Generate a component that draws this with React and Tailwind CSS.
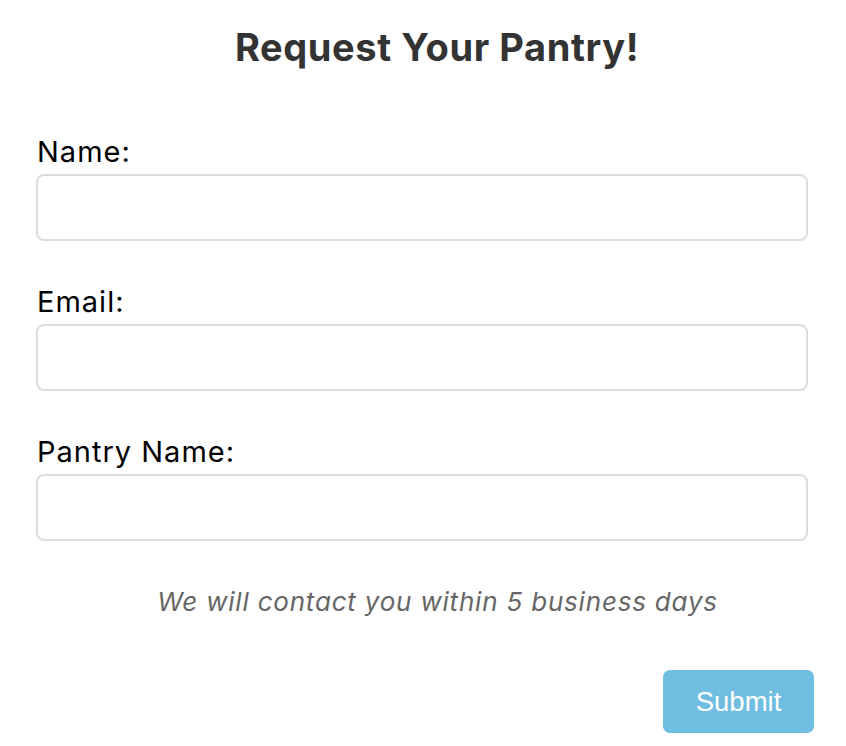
export default function App() {
  const fields = ["Name:", "Email:", "Pantry Name:"];
  return (
    <div className="w-[846px] h-[746px] bg-white overflow-hidden" style={{ fontFamily: "Inter, 'Noto Sans', sans-serif" }}>
      <h1 className="pt-[22px] pl-[28px] text-center text-[38px] leading-[50px] font-bold text-[#333333] tracking-[0.6px]">
        Request Your Pantry!
      </h1>
      <form className="mt-[62px] flex flex-col pl-[36px] pr-[38px]">
        {fields.map((label) => (
          <div key={label} className="flex flex-col mb-[43px]">
            <label className="text-[29px] leading-[36px] tracking-[1px] text-black mb-[4px] ml-[1px]">{label}</label>
            <input
              type="text"
              className="h-[67px] w-full rounded-[8px] border-2 border-[#dddddd] bg-white"
            />
          </div>
        ))}
        <p className="mt-[1px] pl-[31px] text-center italic text-[26px] leading-[34px] tracking-[0.8px] text-[#666666]">
          We will contact you within 5 business days
        </p>
        <div className="flex justify-end mt-[51px] -mr-[6px]">
          <button
            type="button"
            className="w-[151px] h-[63px] rounded-[7px] bg-[#6fbde0] text-white text-[27.5px]"
            style={{ fontFamily: "'Liberation Sans', Arial, sans-serif" }}
          >
            Submit
          </button>
        </div>
      </form>
    </div>
  );
}
